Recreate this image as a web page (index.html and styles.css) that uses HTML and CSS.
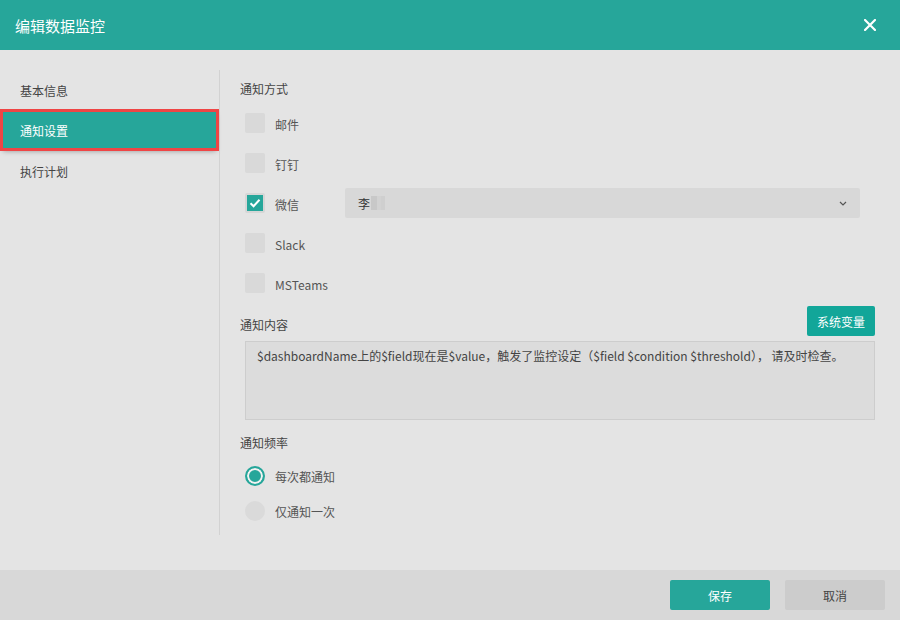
FILE: index.html
```html
<!DOCTYPE html>
<html lang="zh-CN">
<head>
    <meta charset="UTF-8">
    <title>编辑数据监控</title>
    <link rel="stylesheet" href="styles.css">
</head>
<body>
    <div class="dialog">
        <div class="header">
            <span class="title">编辑数据监控</span>
            <svg class="close" width="12" height="12" viewBox="0 0 12 12">
                <path d="M1 1 L11 11 M11 1 L1 11" stroke="#fff" stroke-width="2.2" stroke-linecap="square"/>
            </svg>
        </div>

        <div class="main">
            <div class="sidebar">
                <div class="nav-item">基本信息</div>
                <div class="nav-item active">通知设置</div>
                <div class="nav-item">执行计划</div>
            </div>

            <div class="content">
                <div class="section-label">通知方式</div>

                <div class="row">
                    <span class="checkbox"></span><span class="opt">邮件</span>
                </div>
                <div class="row">
                    <span class="checkbox"></span><span class="opt">钉钉</span>
                </div>
                <div class="row">
                    <span class="checkbox checked">
                        <svg width="14" height="14" viewBox="0 0 14 14"><path d="M2.5 7.2 L5.6 10.2 L11.5 3.8" fill="none" stroke="#fff" stroke-width="2"/></svg>
                    </span><span class="opt">微信</span>
                    <div class="select">
                        <span class="sel-value">李<span class="blur"></span></span>
                        <svg width="8" height="5" viewBox="0 0 8 5"><path d="M1 1 L4 4 L7 1" fill="none" stroke="#555" stroke-width="1.2"/></svg>
                    </div>
                </div>
                <div class="row">
                    <span class="checkbox"></span><span class="opt">Slack</span>
                </div>
                <div class="row">
                    <span class="checkbox"></span><span class="opt">MSTeams</span>
                </div>

                <div class="content-head">
                    <span class="section-label">通知内容</span>
                    <button class="btn-var">系统变量</button>
                </div>
                <div class="textarea">$dashboardName上的$field现在是$value，触发了监控设定（$field $condition $threshold）， 请及时检查。</div>

                <div class="section-label freq">通知频率</div>
                <div class="radio-row">
                    <span class="radio checked"></span><span class="opt">每次都通知</span>
                </div>
                <div class="radio-row">
                    <span class="radio"></span><span class="opt">仅通知一次</span>
                </div>
            </div>
        </div>

        <div class="footer">
            <button class="btn save">保存</button>
            <button class="btn cancel">取消</button>
        </div>
    </div>
</body>
</html>
```

FILE: styles.css
```css
body {
    margin: 0;
    background: #e4e4e4;
    font-family: "Noto Sans CJK SC", "Noto Sans", sans-serif;
    font-size: 12px;
    color: #444;
}

.dialog {
    width: 900px;
    height: 620px;
    display: flex;
    flex-direction: column;
}

.header {
    height: 50px;
    background: #26a69a;
    display: flex;
    align-items: center;
    justify-content: space-between;
    padding: 0 24px 0 15px;
    flex-shrink: 0;
}

.title {
    color: #fff;
    font-size: 15px;
}

.main {
    flex: 1;
    display: flex;
    padding: 20px 0 35px;
}

.sidebar {
    width: 219px;
    border-right: 1px solid #d2d2d2;
}

.nav-item {
    height: 40px;
    line-height: 42px;
    padding-left: 20px;
    color: #444;
}

.nav-item.active {
    margin: 2px 3px 3px;
    height: 36px;
    line-height: 37px;
    padding-left: 17px;
    background: #26a69a;
    color: #fff;
    outline: 3px solid #ef4545;
    box-shadow: 0 3px 5px rgba(0, 0, 0, 0.35);
}

.content {
    flex: 1;
    padding: 0 25px 0 20px;
}

.section-label {
    display: block;
    line-height: 18px;
    padding-top: 10px;
    margin-bottom: 5px;
    color: #444;
}

.row {
    height: 40px;
    display: flex;
    align-items: center;
    padding-left: 5px;
}

.checkbox {
    width: 20px;
    height: 20px;
    box-sizing: border-box;
    background: #d9d9d9;
    border-radius: 2px;
    display: inline-flex;
    align-items: center;
    justify-content: center;
}

.checkbox.checked {
    background: #26a69a;
    border: 2px solid #d6d6d6;
}

.opt {
    margin-left: 10px;
    padding-top: 3px;
    width: 70px;
    color: #555;
}

.select {
    flex: 1;
    height: 30px;
    margin-right: 15px;
    background: #d8d8d8;
    border-radius: 2px;
    display: flex;
    align-items: center;
    justify-content: space-between;
    padding: 0 13px;
}

.sel-value {
    display: flex;
    align-items: center;
    color: #333;
}

.blur {
    width: 14px;
    height: 14px;
    margin-left: 1px;
    background: linear-gradient(90deg, #c8c8c8 0 40%, #d2d2d2 40% 70%, #cfcfcf 70%);
}

.content-head {
    display: flex;
    justify-content: space-between;
    align-items: flex-start;
    margin-top: 3px;
}

.content-head .section-label {
    padding-top: 10px;
    margin: 0;
}

.btn-var {
    width: 68px;
    height: 30px;
    border: none;
    border-radius: 2px;
    background: #12a699;
    color: #fff;
    font-family: inherit;
    font-size: 12px;
    padding: 0;
}

.textarea {
    margin: 5px 0 0 5px;
    height: 67px;
    border: 1px solid #cdcdcd;
    background: #dcdcdc;
    padding: 5px 11px 5px;
    line-height: 18px;
    color: #444;
}

.section-label.freq {
    padding-top: 14px;
    margin-bottom: 6px;
}

.radio-row {
    height: 35px;
    display: flex;
    align-items: center;
    padding-left: 5px;
}

.radio-row .opt {
    padding-top: 1px;
}

.radio {
    width: 20px;
    height: 20px;
    box-sizing: border-box;
    border-radius: 50%;
    background: #dadada;
}

.radio.checked {
    background: #26a69a;
    border: 2px solid #26a69a;
    box-shadow: inset 0 0 0 2px #f2f2f2;
}

.footer {
    height: 50px;
    background: #d8d8d8;
    display: flex;
    justify-content: flex-end;
    align-items: center;
    gap: 15px;
    padding-right: 15px;
    flex-shrink: 0;
}

.btn {
    width: 100px;
    height: 30px;
    border: none;
    border-radius: 2px;
    font-family: inherit;
    font-size: 12px;
}

.btn.save {
    background: #26a69a;
    color: #fff;
}

.btn.cancel {
    background: #cccccc;
    color: #444;
}
```
